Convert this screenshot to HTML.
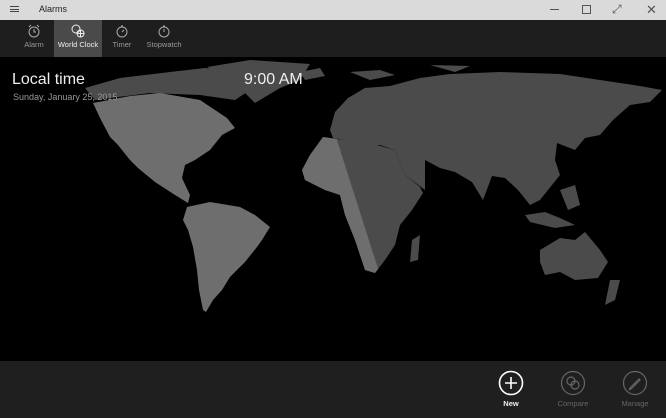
<!DOCTYPE html>
<html><head><meta charset="utf-8"><style>
*{margin:0;padding:0;box-sizing:border-box}
body{width:666px;height:418px;overflow:hidden;background:#000;font-family:"Liberation Sans",sans-serif;position:relative}
.title{position:absolute;left:0;top:0;width:666px;height:20px;background:#dadada;color:#222;font-size:9px}
.tabs{position:absolute;left:0;top:20px;width:666px;height:37px;background:#1e1e1e}
.tab{position:absolute;top:0;height:37px;color:#9a9a9a;font-size:7.5px;text-align:center}
.tab svg{display:block;margin:4px auto 2px}
.bottom{position:absolute;left:0;top:361px;width:666px;height:57px;background:#1f1f1f}
.btn{position:absolute;top:9px;width:50px;text-align:center;font-size:7.5px;color:#666}
.btn svg{display:block;margin:0 auto 3px}
</style></head><body>
<svg style="position:absolute;left:0;top:57px" width="666" height="304" viewBox="0 57 666 304">
<defs><clipPath id="w"><polygon points="0,57 336,57 336,137 381,278 381,361 0,361"/></clipPath></defs>
<g fill="#4b4b4b">
<polygon points="85,88 120,78 170,72 205,68 240,72 250,90 235,100 200,95 150,93 95,100"/>
<polygon points="207,67 250,60 310,64 300,80 280,88 255,103 240,88"/>
<polygon points="300,72 320,68 325,76 305,80"/>
<polygon points="350,72 380,70 395,75 370,80"/>
<polygon points="430,65 470,66 455,72"/>
<polygon points="330,130 335,112 348,98 365,88 390,86 420,78 450,74 500,72 560,74 600,80 640,86 662,90 650,102 630,105 613,120 600,135 585,138 575,150 557,143 555,160 560,175 548,190 540,200 530,205 518,190 505,178 492,176 483,200 472,182 455,172 440,168 425,160 425,190 405,175 395,150 380,145 360,145 345,140 333,138"/>
<polygon points="323,137 345,140 370,143 395,150 405,175 420,187 423,193 412,210 400,225 395,245 385,260 375,273 365,270 355,240 345,215 340,195 325,190 305,180 302,170 310,155"/>
<polygon points="540,250 560,238 575,240 585,232 600,250 608,262 598,278 575,280 560,272 545,275 540,262"/>
<polygon points="525,215 545,212 560,218 575,225 555,228 530,222"/>
<polygon points="560,190 575,185 580,205 568,210"/>
<polygon points="610,280 620,280 615,300 605,305"/>
<polygon points="412,240 420,235 418,260 410,262"/>
</g>
<g fill="#6e6e6e" clip-path="url(#w)">
<polygon points="323,137 345,140 370,143 395,150 405,175 420,187 423,193 412,210 400,225 395,245 385,260 375,273 365,270 355,240 345,215 340,195 325,190 305,180 302,170 310,155"/>
<polygon points="93,103 130,96 160,93 200,100 227,118 235,128 222,135 210,150 195,160 185,165 182,178 190,195 188,203 175,195 155,182 138,168 130,160 118,145 110,137 100,118"/>
<polygon points="187,207 210,202 240,207 255,215 270,227 262,240 257,247 245,262 230,277 222,290 213,300 206,312 203,310 199,290 197,270 193,247 188,230 183,220"/>
</g>
</svg>
<div class="title">
<div style="position:absolute;left:10px;top:6px;width:9px;border-top:1px solid #444;height:6px;border-bottom:1px solid #444"><div style="border-top:1px solid #444;margin-top:2px"></div></div>
<div style="position:absolute;left:39px;top:4px">Alarms</div>
<div style="position:absolute;left:550px;top:9px;width:9px;border-top:1px solid #555"></div>
<div style="position:absolute;left:582px;top:5px;width:9px;height:9px;border:1px solid #555"></div>
<div style="position:absolute;left:612px;top:2px;font-size:12px;color:#555">⤢</div>
<div style="position:absolute;left:646px;top:2px;font-size:13px;color:#555">✕</div>
</div>
<div class="tabs">
<div class="tab" style="left:14px;width:40px"><svg width="14" height="14" viewBox="0 0 14 14" fill="none" stroke="#aaa"><circle cx="7" cy="8" r="5"/><path d="M7 5v3h2M2 3l2-2M12 3l-2-2"/></svg>Alarm</div>
<div class="tab" style="left:54px;width:48px;background:#4a4a4a;color:#eee"><svg width="14" height="14" viewBox="0 0 14 14" fill="none" stroke="#eee"><circle cx="5" cy="5" r="4"/><circle cx="9.5" cy="9.5" r="3.5"/><path d="M6 9.5h7M9.5 6v7"/></svg>World Clock</div>
<div class="tab" style="left:104px;width:36px"><svg width="14" height="14" viewBox="0 0 14 14" fill="none" stroke="#aaa"><circle cx="7" cy="8" r="5"/><path d="M7 8l2-2M6 2h2"/></svg>Timer</div>
<div class="tab" style="left:143px;width:42px"><svg width="14" height="14" viewBox="0 0 14 14" fill="none" stroke="#aaa"><circle cx="7" cy="8" r="5"/><path d="M7 5v3M6 2h2"/></svg>Stopwatch</div>
</div>
<div style="position:absolute;left:12px;top:71px;color:#eee;font-size:16px">Local time</div>
<div style="position:absolute;left:13px;top:92px;color:#999;font-size:9px">Sunday, January 25, 2015</div>
<div style="position:absolute;left:244px;top:71px;color:#eee;font-size:16px">9:00 AM</div>
<div class="bottom">
<div class="btn" style="left:486px;color:#eee;font-weight:bold"><svg width="26" height="26" viewBox="0 0 26 26" fill="none" stroke="#fff" stroke-width="1.6"><circle cx="13" cy="13" r="11.5"/><path d="M13 7v12M7 13h12"/></svg>New</div>
<div class="btn" style="left:548px"><svg width="26" height="26" viewBox="0 0 26 26" fill="none" stroke="#666" stroke-width="1.2"><circle cx="13" cy="13" r="11.5"/><circle cx="11" cy="11" r="4"/><circle cx="15" cy="15" r="4"/></svg>Compare</div>
<div class="btn" style="left:610px"><svg width="26" height="26" viewBox="0 0 26 26" fill="none" stroke="#666" stroke-width="1.2"><circle cx="13" cy="13" r="11.5"/><path d="M8 18l9-9 1 1-9 9-1.5.5z"/></svg>Manage</div>
</div>
</body></html>
